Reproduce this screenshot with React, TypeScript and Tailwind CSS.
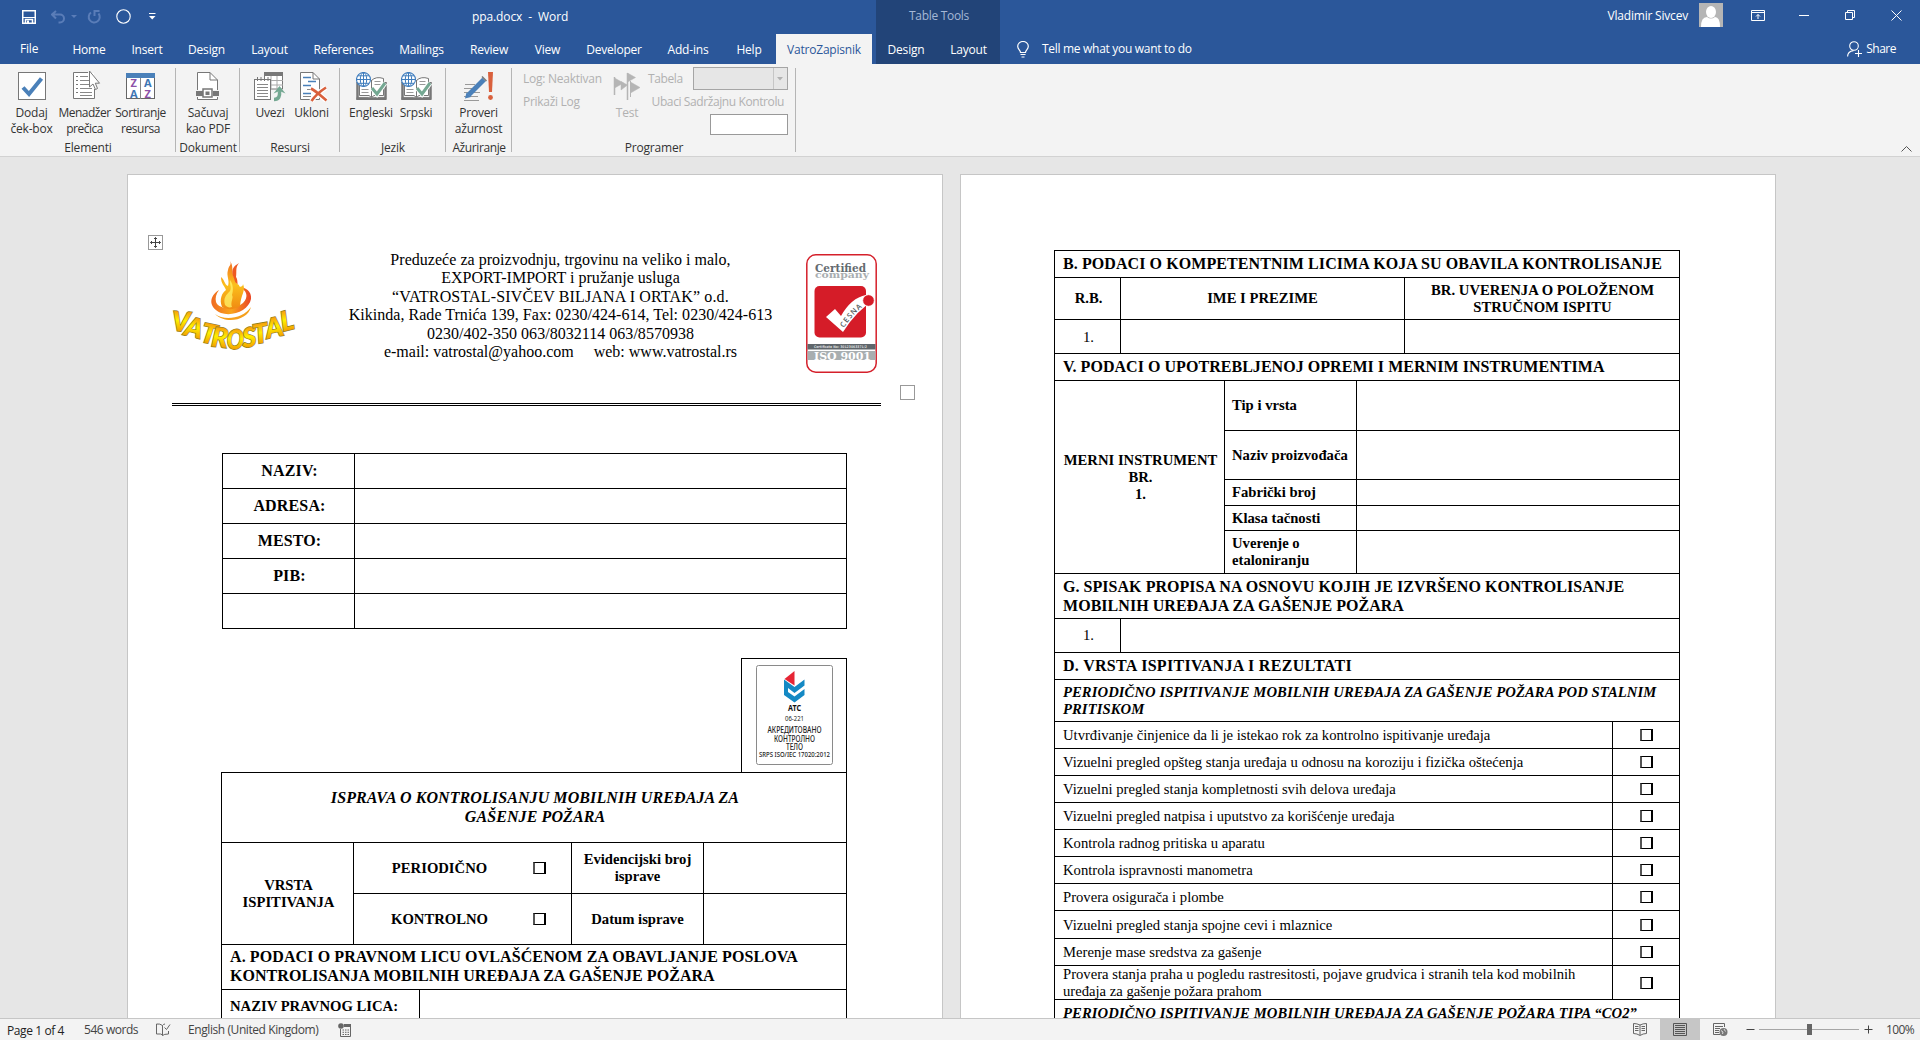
import React from "react";

type Kids = { children?: React.ReactNode };

/* ---------- ribbon icons ---------- */

function CheckBoxIcon() {
  return (
    <svg width="28" height="28" viewBox="0 0 28 28">
      <rect x="0.5" y="0.5" width="27" height="27" fill="#fff" stroke="#777" />
      <path d="M5 15.5 L11 22 L23.5 6.5" fill="none" stroke="#4a80b9" strokeWidth="4" />
    </svg>
  );
}

function CursorListIcon() {
  return (
    <svg width="28" height="30" viewBox="0 0 28 30">
      <path d="M1 3H21V28H1Z" fill="#fff" />
      <path d="M15 2.5H0.5V28.5H21.5V19" fill="none" stroke="#777" />
      <path d="M3 6.5h2M3 10.5h2M3 14.5h2M3 18.5h2M3 22.5h2" stroke="#777" />
      <path d="M7 6.5h8M7 10.5h9M7 14.5h9M7 18.5h12M7 22.5h12M7 25.5h12" stroke="#888" />
      <path d="M16.500 1V17L20 14L22.500 19.500L24.500 18.500L22.300 13.200H26.500Z" fill="#fff" stroke="#777" />
    </svg>
  );
}

function SortIcon() {
  return (
    <svg width="29" height="27" viewBox="0 0 29 27" fontFamily="Open Sans, sans-serif" fontSize="11" fontWeight="700">
      <rect x="0.5" y="0.5" width="28" height="25" fill="#fff" stroke="#666" />
      <rect x="0" y="0" width="29" height="5" fill="#4a80b9" />
      <path d="M14.500 5V26" stroke="#888" />
      <text x="7.500" y="14" textAnchor="middle" fill="#8d52a8">Z</text>
      <text x="21.500" y="14" textAnchor="middle" fill="#3e75b3">A</text>
      <text x="7.500" y="24.500" textAnchor="middle" fill="#3e75b3">A</text>
      <text x="21.500" y="24.500" textAnchor="middle" fill="#8d52a8">Z</text>
    </svg>
  );
}

function PdfIcon() {
  return (
    <svg width="24" height="28" viewBox="0 0 24 28">
      <path d="M1.500 18V0.500H14L21.500 8V18M1.500 25V27.500H21.500V25" fill="#fff" stroke="#777" />
      <path d="M14 0.500V8H21.500" fill="none" stroke="#777" />
      <rect x="0" y="19" width="7" height="5" fill="#777" />
      <rect x="17" y="19" width="6" height="5" fill="#777" />
      <rect x="7" y="17" width="9" height="8" fill="#fff" stroke="#777" strokeWidth="1.500" />
      <rect x="9.500" y="19.500" width="4" height="3.500" fill="#777" />
    </svg>
  );
}

function ImportIcon() {
  return (
    <svg width="32" height="30" viewBox="0 0 32 30">
      <path d="M10.500 0.500H28.500V17H10.500Z" fill="#fff" stroke="#777" />
      <rect x="10" y="0" width="19" height="4" fill="#777" />
      <path d="M17 4V17M23 4V17M16 8.500h13M16 13h13" stroke="#aaa" />
      <rect x="0.500" y="7.500" width="16" height="20" fill="#fff" stroke="#777" />
      <path d="M3.500 5v4M7 5v4M10.500 5v4M14 5v4" stroke="#777" />
      <path d="M3 12.500h11M3 15.500h11M3 18.500h11M3 21.500h11M3 24.500h11" stroke="#888" />
      <path d="M20 27.500C25 27.500 26 24 25.500 19" fill="none" stroke="#74a892" strokeWidth="3.500" />
      <path d="M25.500 14L31.500 21.500L25.500 19L19.500 21.500Z" fill="#74a892" />
    </svg>
  );
}

function RemoveIcon() {
  return (
    <svg width="28" height="30" viewBox="0 0 28 30">
      <path d="M0.500 0.500H13L19.500 7V27.500H0.500Z" fill="#fff" stroke="#777" />
      <path d="M13 0.500V7H19.500" fill="none" stroke="#777" />
      <path d="M3 5.500h8M3 13.500h8M8 9.500h8M3 21.500h8" stroke="#4a80b9" strokeWidth="1.600" />
      <path d="M7 17.500h6M3 24.500h8" stroke="#888" />
      <path d="M11 16.500C16 19 21 24 26.500 28.500M26 15.500C19 20 15 24 11.500 29" fill="none" stroke="#fff" strokeWidth="5" />
      <path d="M11 16.500C16 19 21 24 26.500 28.500M26 15.500C19 20 15 24 11.500 29" fill="none" stroke="#d9603c" strokeWidth="2.600" />
    </svg>
  );
}

function LanguageIcon() {
  return (
    <svg width="31" height="29" viewBox="0 0 31 29">
      <path d="M1.500 10V26.500H29.500V10" fill="none" stroke="#777" strokeWidth="2.500" />
      <path d="M3.500 9V23.500H13L15.500 25.500L18 23.500H27.500V6.500Q20 4 15.500 8.500" fill="#fff" stroke="#777" />
      <path d="M15.500 8V25" stroke="#777" />
      <path d="M0.500 25.500H12Q15.500 28.500 19 25.500H30V28H0.500Z" fill="#777" />
      <path d="M5.500 17.500h7M5.500 20.500h7M18.500 9.500h6M18.500 12.500h6M18.500 20.500h2" stroke="#999" />
      <circle cx="7.500" cy="7.500" r="7" fill="#fff" stroke="#3e7cbd" strokeWidth="1.100" />
      <ellipse cx="7.500" cy="7.500" rx="3.200" ry="7" fill="none" stroke="#3e7cbd" />
      <path d="M0.500 7.500h14M7.500 0.500v14M2 3.800h11M2 11.300h11" stroke="#3e7cbd" />
      <path d="M16 16L21 22L29 11" fill="none" stroke="#fff" strokeWidth="5" />
      <path d="M16 16L21 22L29 11" fill="none" stroke="#74a892" strokeWidth="3" />
    </svg>
  );
}

function UpdateIcon() {
  return (
    <svg width="30" height="30" viewBox="0 0 30 30">
      <path d="M1 12.500h10M0 16.500h8M0 20.500h16M0 24.500h14M0 28.500h15" stroke="#999" />
      <path d="M4.500 23L20 7.500" stroke="#4a80b9" strokeWidth="5" />
      <path d="M1 26.500L2.500 20.500L7 25Z" fill="#4a80b9" />
      <path d="M18 4.500L22.500 9" stroke="#777" strokeWidth="1.500" />
      <path d="M24 0H29L28 20H25Z" fill="#d9603c" />
      <circle cx="26.500" cy="25.500" r="2.400" fill="#d9603c" />
    </svg>
  );
}

function FlagsIcon() {
  return (
    <svg width="28" height="29" viewBox="0 0 28 29" fill="#b5b5b5" stroke="#b5b5b5">
      <path d="M1.500 5V23M14.500 1V28" fill="none" strokeWidth="1.500" />
      <path d="M1.500 6L10.500 11L1.500 16ZM14.500 1L22.500 5.500L14.500 10ZM14.500 13L8 18V9.500ZM17.500 10L27 15.500L17.500 21Z" strokeWidth="0.500" />
      <path d="M17.500 9V25" fill="none" />
    </svg>
  );
}

/* ---------- header ---------- */

function TitleBar() {
  return (
    <div className="flex h-[34px] items-stretch text-white">
      <div className="flex w-[472px] items-center pb-[1px] pl-[22px]">
        <svg width="14" height="14" viewBox="0 0 14 14" fill="none" stroke="#fff">
          <path d="M0.750 0.750H13.250V13.250H0.750Z" strokeWidth="1.500" />
          <path d="M1 7.500H13" />
          <path d="M3.500 13V9.500H10.500V13" strokeWidth="1.500" />
          <path d="M5 10.500h2v3h-2z" fill="#fff" stroke="none" />
        </svg>
        <svg className="ml-[15px]" width="14" height="14" viewBox="0 0 14 14" fill="none" stroke="#5a7db8" strokeWidth="2">
          <path d="M5 1L1 4.500L5 8.500M1.500 4.500H9A4 4 0 0 1 9 12.500H7.500" />
        </svg>
        <svg className="ml-[6px]" width="6" height="3" viewBox="0 0 6 3"><path d="M0 0H6L3 3Z" fill="#5a7db8" /></svg>
        <svg className="ml-[10px]" width="15" height="14" viewBox="0 0 15 14" fill="none" stroke="#5a7db8" strokeWidth="2">
          <path d="M4 2.500A5.500 5.500 0 1 0 11.500 3.500M12.500 1H7.500V6" />
        </svg>
        <svg className="ml-[14px]" width="15" height="15" viewBox="0 0 15 15" fill="none" stroke="#fff">
          <circle cx="7.500" cy="7.500" r="6.700" strokeWidth="1.100" />
        </svg>
        <svg className="ml-[18px]" width="7" height="7" viewBox="0 0 7 7"><path d="M0 0.500H6.500" stroke="#fff" /><path d="M0 3H6.500L3.200 6.500Z" fill="#fff" /></svg>
      </div>
      <div className="w-[404px] pt-[8px] leading-[17px] tracking-[-0.100px] whitespace-pre">ppa.docx  -  Word</div>
      <div className="w-[124px] bg-[#224478] pt-[7px] pl-[2px] text-center leading-[17px] tracking-[-0.300px] text-[#a5b8d6]">Table Tools</div>
      <div className="flex flex-1 items-start justify-end">
        <span className="mt-[7px] mr-[11px] leading-[17px]">Vladimir Sivcev</span>
        <svg className="mt-[3px] mr-[28px]" width="24" height="24" viewBox="0 0 24 24">
          <rect width="24" height="24" fill="#b5b5b5" />
          <ellipse cx="12" cy="9" rx="5" ry="6" fill="#fff" />
          <path d="M2 24Q2 14 8 14Q12 17 16 14Q21 14 21 24Z" fill="#fff" />
        </svg>
        <svg className="mt-[10px] mr-[34px]" width="14" height="11" viewBox="0 0 14 11" fill="none" stroke="#fff">
          <path d="M0.500 0.500H13.500V10.500H0.500ZM0.500 2.500H13.500M7 9V4.500M5 6.500L7 4.500L9 6.500" />
        </svg>
        <svg className="mt-[15px] mr-[36px]" width="10" height="1" viewBox="0 0 10 1"><path d="M0 0.500H10" stroke="#fff" /></svg>
        <svg className="mt-[10px] mr-[36px]" width="10" height="10" viewBox="0 0 10 10" fill="none" stroke="#fff">
          <path d="M0.500 2.500H7.500V9.500H0.500ZM2.500 2.500V0.500H9.500V7.500H7.500" />
        </svg>
        <svg className="mt-[10px] mr-[18px]" width="11" height="11" viewBox="0 0 11 11"><path d="M0.500 0.500L10.500 10.500M10.500 0.500L0.500 10.500" stroke="#fff" /></svg>
      </div>
    </div>
  );
}

function Tab({ w, children }: { w: string } & Kids) {
  return <div className={"pt-[7px] text-center leading-[17px] whitespace-nowrap " + w}>{children}</div>;
}

function TabRow() {
  return (
    <div className="flex h-[30px] text-white">
      <div className="w-[59px] pt-[6px] pl-[20px] leading-[17px]">File</div>
      <Tab w="w-[60px]">Home</Tab>
      <Tab w="w-[56px]">Insert</Tab>
      <Tab w="w-[63px]">Design</Tab>
      <Tab w="w-[63px]">Layout</Tab>
      <Tab w="w-[85px]">References</Tab>
      <Tab w="w-[71px]">Mailings</Tab>
      <Tab w="w-[64px]">Review</Tab>
      <Tab w="w-[53px]">View</Tab>
      <Tab w="w-[80px]">Developer</Tab>
      <Tab w="w-[68px]">Add-ins</Tab>
      <Tab w="w-[54px]">Help</Tab>
      <Tab w="w-[96px] bg-[#f3f3f3] text-[#2b579a] mr-[4px]">VatroZapisnik</Tab>
      <Tab w="w-[61px] bg-[#224478] pr-px">Design</Tab>
      <Tab w="w-[63px] bg-[#224478]">Layout</Tab>
      <svg className="mt-[7px] ml-[17px]" width="12" height="17" viewBox="0 0 12 17" fill="none" stroke="#fff" strokeWidth="1.200">
        <path d="M3.500 11.500C3.500 9 0.700 8.500 0.700 5.300A5.200 4.700 0 0 1 11.300 5.300C11.300 8.500 8.500 9 8.500 11.500ZM3.500 13.500H8.500M4.500 16H7.500" />
      </svg>
      <div className="ml-[13px] pt-[6px] leading-[17px] tracking-[-0.300px] whitespace-nowrap">Tell me what you want to do</div>
      <div className="flex flex-1 justify-end pr-[24px]">
        <svg className="mt-[7px] mr-[4px]" width="15" height="16" viewBox="0 0 15 16" fill="none" stroke="#fff" strokeWidth="1.100">
          <circle cx="7" cy="5" r="4.300" />
          <path d="M0.600 15.500C0.600 11.500 3 10 6.500 9.600M8 12.500H15M11.500 9V16" />
        </svg>
        <span className="pt-[6px] leading-[17px] tracking-[-0.500px]">Share</span>
      </div>
    </div>
  );
}

/* ---------- ribbon ---------- */

function Group({ w, label, children }: { w: string; label: string } & Kids) {
  return (
    <div className={"flex flex-col " + w}>
      <div className="flex h-[76px]">{children}</div>
      <div className="pl-px text-center leading-[16px] whitespace-nowrap text-[#333]">{label}</div>
    </div>
  );
}

function Sep() {
  return <div className="mt-[4px] h-[84px] w-px shrink-0 bg-[#b5b5b5]" />;
}

function Btn({ w, icon, lines, dim }: { w: string; icon: React.ReactNode; lines: string[]; dim?: boolean }) {
  return (
    <div className={"flex shrink-0 flex-col items-center pt-[8px] " + w}>
      <div className="flex h-[33px] items-start">{icon}</div>
      {lines.map((l) => (
        <div key={l} className={"leading-[16px] whitespace-nowrap " + (dim ? "text-[#b1b1b1]" : "text-[#333]")}>{l}</div>
      ))}
    </div>
  );
}

function Ribbon() {
  return (
    <div className="flex h-[93px] border-b border-[#d2d2d2] bg-[#f3f3f3]">
      <Group w="w-[175px]" label="Elementi">
        <div className="w-[4px]" />
        <Btn w="w-[55px]" icon={<CheckBoxIcon />} lines={["Dodaj", "ček-box"]} />
        <Btn w="w-[51px] tracking-[-0.500px]" icon={<div className="-mt-[2px] ml-[4px]"><CursorListIcon /></div>} lines={["Menadžer", "prečica"]} />
        <Btn w="w-[61px] tracking-[-0.400px]" icon={<div className="mt-[1px]"><SortIcon /></div>} lines={["Sortiranje", "resursa"]} />
      </Group>
      <Sep />
      <Group w="w-[63px]" label="Dokument">
        <Btn w="w-[64px]" icon={<PdfIcon />} lines={["Sačuvaj", "kao PDF"]} />
      </Group>
      <Sep />
      <Group w="w-[99px]" label="Resursi">
        <div className="w-[9px]" />
        <Btn w="w-[42px]" icon={<ImportIcon />} lines={["Uvezi"]} />
        <Btn w="w-[41px]" icon={<div className="ml-[5px]"><RemoveIcon /></div>} lines={["Ukloni"]} />
      </Group>
      <Sep />
      <Group w="w-[105px]" label="Jezik">
        <div className="w-[7px]" />
        <Btn w="w-[48px]" icon={<LanguageIcon />} lines={["Engleski"]} />
        <Btn w="w-[42px]" icon={<LanguageIcon />} lines={["Srpski"]} />
      </Group>
      <Sep />
      <Group w="w-[65px] tracking-[-0.400px]" label="Ažuriranje">
        <Btn w="w-[65px] tracking-[-0.200px]" icon={<UpdateIcon />} lines={["Proveri", "ažurnost"]} />
      </Group>
      <Sep />
      <Group w="w-[283px]" label="Programer">
        <div className="w-[91px] shrink-0 pl-[11px] text-[#b1b1b1]">
          <div className="pt-[7px] leading-[16px] tracking-[-0.250px] whitespace-nowrap">Log: Neaktivan</div>
          <div className="pt-[7px] leading-[16px] tracking-[-0.300px] whitespace-nowrap">Prikaži Log</div>
        </div>
        <Btn w="w-[48px]" icon={<FlagsIcon />} lines={["Test"]} dim />
        <div className="flex w-[137px] shrink-0 flex-col items-end text-[#b1b1b1]">
          <div className="flex w-full items-start justify-between">
            <span className="-ml-[3px] pt-[7px] leading-[16px] tracking-[-0.400px]">Tabela</span>
            <div className="mt-[3px] flex h-[23px] w-[95px] border border-[#a5a5a5] bg-[#e6e6e6]">
              <div className="w-[80px] border-r border-[#c6c6c6]" />
              <svg className="mt-[9px] ml-[3px]" width="6" height="4" viewBox="0 0 6 4"><path d="M0 0H6L3 3.500Z" fill="#b1b1b1" /></svg>
            </div>
          </div>
          <div className="mt-[4px] mr-[4px] leading-[16px] tracking-[-0.400px] whitespace-nowrap">Ubaci Sadržajnu Kontrolu</div>
          <div className="mt-[4px] h-[21px] w-[78px] border border-[#999] bg-white" />
        </div>
      </Group>
      <Sep />
      <div className="flex flex-1 items-end justify-end pr-[8px] pb-[4px]">
        <svg width="11" height="6" viewBox="0 0 11 6" fill="none" stroke="#555"><path d="M0.500 5.500L5.500 0.500L10.500 5.500" /></svg>
      </div>
    </div>
  );
}

/* ---------- document pieces ---------- */

function Cell({ w, h, className = "", children }: { w: string; h: string; className?: string } & Kids) {
  return (
    <div className={"flex shrink-0 items-center border-r border-b border-black " + w + " " + h + " " + className}>
      {children}
    </div>
  );
}

function Box() {
  return <div className="h-[12px] w-[13px] border-x-2 border-y border-black border-l-[#555]" />;
}

const fireLetters: [string, number, number, number][] = [
  ["V", 8, 71, 4],
  ["A", 20, 77, 14],
  ["T", 35, 83, 12],
  ["R", 47, 87, 6],
  ["O", 63, 89, 2],
  ["S", 78, 87, -5],
  ["T", 90, 83, -10],
  ["A", 104, 77, -12],
  ["L", 117, 70, -14],
];

function VatrostalLogo() {
  return (
    <svg className="overflow-visible" width="126" height="94" viewBox="0 0 126 94">
      <defs>
        <linearGradient id="flame" x1="0" y1="0" x2="0" y2="1">
          <stop offset="0" stopColor="#f36f21" />
          <stop offset="0.500" stopColor="#fbc01c" />
          <stop offset="1" stopColor="#f08a12" />
        </linearGradient>
        <linearGradient id="bowl" x1="0" y1="0" x2="1" y2="0">
          <stop offset="0" stopColor="#f06a22" />
          <stop offset="0.500" stopColor="#f9a51c" />
          <stop offset="1" stopColor="#ea4424" />
        </linearGradient>
        <linearGradient id="letters" x1="0" y1="0" x2="0" y2="1">
          <stop offset="0.150" stopColor="#f58a10" />
          <stop offset="0.500" stopColor="#fff000" />
          <stop offset="0.850" stopColor="#f29a00" />
        </linearGradient>
      </defs>
      <path d="M47 30C36 37 37 48 49 53C61 57 77 50 79 39C80 31 73 27 67 27C75 30 77 37 71 43C63 50 47 50 44 42C43 38 44 34 47 30Z" fill="url(#bowl)" />
      <path d="M50 47C47 39 50 33 54 30C52 25 49 24 49 17C53 20 52 24 56 26C58 20 54 16 56 10C57 5 60 5 58 1C62 6 59 12 62 17C65 21 63 23 67 25C67 28 71 27 71 24C74 31 69 34 68 46C62 50 55 50 50 47Z" fill="url(#flame)" />
      <path d="M61 16C59 9 62 6 67 3C63 8 65 11 64 17C66 20 65 23 66 24C62 23 63 19 61 16Z" fill="#ef5a23" />
      <path d="M53 45C51 38 54 35 58 31C60 27 57 23 58 20C62 25 61 32 60 35C62 38 58 42 60 47C57 48 55 47 53 45Z" fill="#fff46a" opacity="0.750" />
      <path d="M43 54C52 61 71 59 79 47C76 60 54 65 43 54Z" fill="#f5a01d" />
      {fireLetters.map(([c, x, y, r], i) => (
        <text
          key={i}
          x={x}
          y={y}
          textAnchor="middle"
          transform={`rotate(${r} ${x} ${y})`}
          fontFamily="Lato, sans-serif"
          fontWeight="900"
          fontStyle="italic"
          fontSize="27"
          textLength={c === "O" ? 17 : undefined}
          lengthAdjust="spacingAndGlyphs"
          fill="url(#letters)"
          stroke="#8f7d1a"
          strokeWidth="1.400"
          paintOrder="stroke"
        >
          {c}
        </text>
      ))}
    </svg>
  );
}

function CertifiedLogo() {
  return (
    <svg width="71" height="119" viewBox="0 0 71 119">
      <rect x="0.800" y="0.800" width="69.400" height="117.400" rx="9" fill="#fff" stroke="#d5202b" strokeWidth="1.500" />
      <text x="9" y="23.500" fontFamily="DejaVu Serif, serif" fontSize="10" fontWeight="700" fill="#a9aeb1" textLength="54" lengthAdjust="spacingAndGlyphs">company</text>
      <text x="9" y="18" fontFamily="DejaVu Serif, serif" fontSize="10.500" fontWeight="700" fill="#646b70" textLength="51" lengthAdjust="spacingAndGlyphs">Certified</text>
      <rect x="8.500" y="32" width="51.500" height="51.500" rx="5" fill="#d51c28" />
      <path d="M20 63L29 55L35 62Q45 44 60 41L67 47Q51 56 37 78Z" fill="#fff" />
      <circle cx="62.500" cy="46.500" r="5.800" fill="#d51c28" stroke="#fff" strokeWidth="0.800" />
      <path id="cesna" d="M38 74Q45 62 60 50" fill="none" />
      <text fontFamily="Open Sans, sans-serif" fontSize="7.500" fontWeight="600" fill="#555b60"><textPath href="#cesna" textLength="28">CESNA</textPath></text>
      <rect x="1.500" y="90" width="68" height="5.500" fill="#5f666b" />
      <text x="8" y="94.200" fontFamily="DejaVu Sans, sans-serif" fontSize="3.600" fontWeight="700" fill="#dadcdd" textLength="53" lengthAdjust="spacingAndGlyphs">Certificate No: 30123063371/2</text>
      <rect x="1.500" y="97" width="68" height="9" fill="#a8aeb0" />
      <text x="8" y="106" fontFamily="DejaVu Serif, serif" fontSize="11.500" fontWeight="700" fill="#fff" textLength="57" lengthAdjust="spacingAndGlyphs">ISO 9001</text>
    </svg>
  );
}

function AtsStamp() {
  return (
    <svg width="77" height="100" viewBox="0 0 77 100" fontFamily="Noto Sans, sans-serif" textAnchor="middle" fill="#222">
      <rect x="0.500" y="0.500" width="76" height="99" rx="2" fill="#fff" stroke="#8a8a8a" />
      <path d="M38.500 6V20.500L28.500 14Z" fill="#e62535" />
      <path d="M28 14.500L38.500 22L48.500 14.500V20.500L38.500 28L32 23V27L38.500 31.500L48.500 24V30L38.500 37.500L28 30Z" fill="#1489c4" />
      <text x="38.500" y="46" fontSize="8" fontWeight="700" fill="#111" textLength="13" lengthAdjust="spacingAndGlyphs">АТС</text>
      <text x="38.500" y="56" fontSize="6.500" textLength="19" lengthAdjust="spacingAndGlyphs">06-221</text>
      <text x="38.500" y="68" fontSize="8" fontWeight="500" textLength="54" lengthAdjust="spacingAndGlyphs">АКРЕДИТОВАНО</text>
      <text x="38.500" y="76.500" fontSize="8" fontWeight="500" textLength="41" lengthAdjust="spacingAndGlyphs">КОНТРОЛНО</text>
      <text x="38.500" y="84.700" fontSize="8" fontWeight="500" textLength="17" lengthAdjust="spacingAndGlyphs">ТЕЛО</text>
      <text x="38.500" y="92.300" fontSize="6.800" fontWeight="500" textLength="71" lengthAdjust="spacingAndGlyphs">SRPS ISO/IEC 17020:2012</text>
    </svg>
  );
}

function PageOne() {
  return (
    <div className="h-[1056px] w-[816px] shrink-0 border border-[#c6c6c6] bg-white pt-[60px]">
      <div className="flex h-[150px]">
        <svg className="ml-[20px]" width="15" height="15" viewBox="0 0 15 15" fill="none" stroke="#444">
          <rect x="0.500" y="0.500" width="14" height="14" stroke="#999" />
          <path d="M7.500 2.500V12.500M2.500 7.500H12.500" />
          <path d="M6 4L7.500 2.500L9 4M6 11L7.500 12.500L9 11M4 6L2.500 7.500L4 9M11 6L12.500 7.500L11 9" />
        </svg>
        <div className="mt-[25px] ml-[9px]"><VatrostalLogo /></div>
        <div className="mt-[16px] ml-[44px] w-[437px] text-center text-[16px] leading-[18.400px] tracking-[0.030px] whitespace-pre">
          <div>Preduzeće za proizvodnju, trgovinu na veliko i malo,</div>
          <div>EXPORT-IMPORT i pružanje usluga</div>
          <div className="tracking-[0.150px]">“VATROSTAL-SIVČEV BILJANA I ORTAK” o.d.</div>
          <div>Kikinda, Rade Trnića 139, Fax: 0230/424-614, Tel: 0230/424-613</div>
          <div>0230/402-350 063/8032114 063/8570938</div>
          <div className="tracking-normal">e-mail: vatrostal@yahoo.com     web: www.vatrostal.rs</div>
        </div>
        <div className="mt-[19px] ml-[27px]"><CertifiedLogo /></div>
      </div>
      <div className="flex h-[18px] justify-end pr-[27px]">
        <div className="h-[15px] w-[15px] border border-[#999]" />
      </div>
      <div className="ml-[44px] h-[3px] w-[709px] border-y border-black" />

      <div className="mt-[47px] ml-[94px] w-[625px] border-t border-l border-black text-[16px] leading-[18.400px] font-bold tracking-[0.150px]">
        {["NAZIV:", "ADRESA:", "MESTO:", "PIB:", ""].map((l) => (
          <div key={l} className="flex">
            <Cell w="w-[132px]" h="h-[35px]" className="justify-center pl-[2px]">{l}</Cell>
            <Cell w="w-[492px]" h="h-[35px]" />
          </div>
        ))}
      </div>

      <div className="mt-[29px] ml-[613px] h-[114px] w-[106px] border-x border-t border-black pt-[6px] pl-[14px]">
        <AtsStamp />
      </div>
      <div className="ml-[93px] w-[626px] border-t border-l border-black text-[14.670px] leading-[17px] font-bold">
        <Cell w="w-[625px]" h="h-[70px]" className="justify-center pl-[2px] text-center text-[16px] leading-[18.600px] tracking-[0.090px] italic">
          <div>
            <div>ISPRAVA O KONTROLISANJU MOBILNIH UREĐAJA ZA</div>
            <div>GAŠENJE POŽARA</div>
          </div>
        </Cell>
        <div className="flex">
          <Cell w="w-[132px]" h="h-[102px]" className="justify-center pl-[2px] text-center">
            <div>VRSTA<br />ISPITIVANJA</div>
          </Cell>
          <div>
            {[["PERIODIČNO", "Evidencijski broj isprave"], ["KONTROLNO", "Datum isprave"]].map(([a, b]) => (
              <div key={a} className="flex">
                <Cell w="w-[218px]" h="h-[51px]">
                  <div className="w-[171px] text-center">{a}</div>
                  <div className="ml-[8px]"><Box /></div>
                </Cell>
                <Cell w="w-[132px]" h="h-[51px]" className="justify-center px-[8px] text-center">{b}</Cell>
                <Cell w="w-[143px]" h="h-[51px]" />
              </div>
            ))}
          </div>
        </div>
        <Cell w="w-[625px]" h="h-[45px]" className="pl-[8px] text-[16px] leading-[18.600px]">
          <div className="tracking-[0.100px]">A. PODACI O PRAVNOM LICU OVLAŠĆENOM ZA OBAVLJANJE POSLOVA<br /><span className="tracking-[0.050px]">KONTROLISANJA MOBILNIH UREĐAJA ZA GAŠENJE POŽARA</span></div>
        </Cell>
        <div className="flex">
          <Cell w="w-[198px]" h="h-[35px]" className="pb-px pl-[8px]">NAZIV PRAVNOG LICA:</Cell>
          <Cell w="w-[427px]" h="h-[35px]" />
        </div>
      </div>
    </div>
  );
}

const checks: [string, string][] = [
  ["Utvrđivanje činjenice da li je istekao rok za kontrolno ispitivanje uređaja", "h-[27px]"],
  ["Vizuelni pregled opšteg stanja uređaja u odnosu na koroziju i fizička oštećenja", "h-[27px]"],
  ["Vizuelni pregled stanja kompletnosti svih delova uređaja", "h-[27px]"],
  ["Vizuelni pregled natpisa i uputstvo za korišćenje uređaja", "h-[27px]"],
  ["Kontrola radnog pritiska u aparatu", "h-[27px]"],
  ["Kontrola ispravnosti manometra", "h-[27px]"],
  ["Provera osigurača i plombe", "h-[27px]"],
  ["Vizuelni pregled stanja spojne cevi i mlaznice", "h-[28px]"],
  ["Merenje mase sredstva za gašenje", "h-[27px]"],
  ["Provera stanja praha u pogledu rastresitosti, pojave grudvica i stranih tela kod mobilnih uređaja za gašenje požara prahom", "h-[34px]"],
];

const instrument: [string, string][] = [
  ["Tip i vrsta", "h-[50px]"],
  ["Naziv proizvođača", "h-[49px]"],
  ["Fabrički broj", "h-[26px]"],
  ["Klasa tačnosti", "h-[25px]"],
  ["Uverenje o etaloniranju", "h-[43px]"],
];

function PageTwo() {
  const heading = "pl-[8px] font-bold text-[16px] leading-[18.600px]";
  return (
    <div className="h-[1056px] w-[816px] shrink-0 border border-[#c6c6c6] bg-white pt-[75px] pl-[93px]">
      <div className="w-[626px] border-t border-l border-black text-[14.670px] leading-[17px]">
        <Cell w="w-[625px]" h="h-[27px]" className={heading + " tracking-[0.080px]"}>B. PODACI O KOMPETENTNIM LICIMA KOJA SU OBAVILA KONTROLISANJE</Cell>
        <div className="flex text-center font-bold">
          <Cell w="w-[66px]" h="h-[42px]" className="justify-center pl-[2px]">R.B.</Cell>
          <Cell w="w-[284px]" h="h-[42px]" className="justify-center">IME I PREZIME</Cell>
          <Cell w="w-[275px]" h="h-[42px]" className="justify-center pl-px">
            <div className="tracking-[0.030px]">BR. UVERENJA O POLOŽENOM<br />STRUČNOM ISPITU</div>
          </Cell>
        </div>
        <div className="flex">
          <Cell w="w-[66px]" h="h-[34px]" className="justify-center pt-px pl-[2px]">1.</Cell>
          <Cell w="w-[284px]" h="h-[34px]" />
          <Cell w="w-[275px]" h="h-[34px]" />
        </div>
        <Cell w="w-[625px]" h="h-[27px]" className={heading + " tracking-[0.040px]"}>V. PODACI O UPOTREBLJENOJ OPREMI I MERNIM INSTRUMENTIMA</Cell>
        <div className="flex font-bold">
          <Cell w="w-[170px]" h="h-[193px]" className="justify-center pt-px pl-[2px] text-center">
            <div className="leading-[16.700px] whitespace-nowrap">MERNI INSTRUMENT<br />BR.<br />1.</div>
          </Cell>
          <div>
            {instrument.map(([l, h]) => (
              <div key={l} className="flex">
                <Cell w="w-[132px]" h={h} className="pl-[7px]">{l}</Cell>
                <Cell w="w-[323px]" h={h} />
              </div>
            ))}
          </div>
        </div>
        <Cell w="w-[625px]" h="h-[45px]" className={heading + " pt-px tracking-[0.040px]"}>
          <div>G. SPISAK PROPISA NA OSNOVU KOJIH JE IZVRŠENO KONTROLISANJE<br />MOBILNIH UREĐAJA ZA GAŠENJE POŽARA</div>
        </Cell>
        <div className="flex">
          <Cell w="w-[66px]" h="h-[34px]" className="justify-center pl-[2px]">1.</Cell>
          <Cell w="w-[559px]" h="h-[34px]" />
        </div>
        <Cell w="w-[625px]" h="h-[27px]" className={heading + " tracking-[0.300px]"}>D. VRSTA ISPITIVANJA I REZULTATI</Cell>
        <Cell w="w-[625px]" h="h-[42px]" className="pl-[8px] font-bold tracking-[0.070px] italic">
          <div>PERIODIČNO ISPITIVANJE MOBILNIH UREĐAJA ZA GAŠENJE POŽARA POD STALNIM<br />PRITISKOM</div>
        </Cell>
        {checks.map(([l, h]) => (
          <div key={l} className="flex">
            <Cell w="w-[558px]" h={h} className="pt-px pr-[20px] pl-[8px]">{l}</Cell>
            <Cell w="w-[67px]" h={h} className="justify-center"><Box /></Cell>
          </div>
        ))}
        <Cell w="w-[625px]" h="h-[34px]" className="items-start pt-[5px] pl-[8px] font-bold tracking-[0.090px] italic">
          PERIODIČNO ISPITIVANJE MOBILNIH UREĐAJA ZA GAŠENJE POŽARA TIPA “CO2”
        </Cell>
      </div>
    </div>
  );
}

/* ---------- status bar ---------- */

function StatusBar() {
  return (
    <div className="flex h-[22px] items-center border-t border-[#c6c6c6] bg-[#f3f3f3] leading-[16px] whitespace-nowrap text-[#444]">
      <span className="w-[77px] pt-[2px] pl-[7px] tracking-[-0.400px] text-[#222]">Page 1 of 4</span>
      <span className="w-[79px] pl-[7px] tracking-[-0.450px]">546 words</span>
      <svg width="15" height="13" viewBox="0 0 15 13" fill="none" stroke="#666">
        <path d="M6.500 2.500Q4 0.500 0.500 1V11H4.500Q6.500 11.500 6.500 12.500V2.500Q7.500 1 9 1M6.500 12.500Q8 11 12.500 11V8M8.500 4.500L10.500 6.500L14 1.500" />
      </svg>
      <span className="w-[150px] pl-[17px] tracking-[-0.420px]">English (United Kingdom)</span>
      <svg className="ml-[17px]" width="14" height="14" viewBox="0 0 14 14" fill="none" stroke="#666">
        <path d="M2.500 6V13.500H12.500V2.500H7" />
        <path d="M6 2.500h7" strokeWidth="3" />
        <circle cx="3" cy="3" r="2.800" fill="#666" stroke="none" />
        <path d="M4.500 7h6.500M4.500 9.300h6.500M4.500 11.500h6.500" strokeDasharray="1.500 1" />
      </svg>
      <div className="flex h-full flex-1 items-center justify-end pr-[7px]">
        <svg width="14" height="13" viewBox="0 0 14 13" fill="none" stroke="#666">
          <path d="M7 2Q4 0.500 0.500 0.500V10.500Q4 10.500 7 12.500Q10 10.500 13.500 10.500V0.500Q10 0.500 7 2V12" />
          <path d="M2 3.500h3.500M2 5.500h3.500M2 7.500h3.500M8.500 3.500h3.500M8.500 5.500h3.500M8.500 7.500h3.500" />
        </svg>
        <div className="ml-[13px] flex h-full w-[40px] items-center justify-center bg-[#c6c6c6]">
          <svg width="14" height="13" viewBox="0 0 14 13" fill="none" stroke="#555">
            <path d="M0.500 0.500H13.500V12.500H0.500ZM2 2.500h10M2 4.500h10M2 6.500h10M2 8.500h10M2 10.500h10" />
          </svg>
        </div>
        <svg className="ml-[13px]" width="15" height="13" viewBox="0 0 15 13" fill="none" stroke="#666">
          <path d="M7 11.500H0.500V0.500H11.500V4M2 3.500h8M2 5.500h5M2 7.500h4M2 9.500h4" />
          <circle cx="10.500" cy="9" r="4" fill="#777" stroke="none" />
          <path d="M8 7.500L10 9L9.500 11M11 6L12.500 8.500" stroke="#ddd" />
        </svg>
        <svg className="ml-[18px]" width="9" height="9" viewBox="0 0 9 9"><path d="M0.500 4.500H8.500" stroke="#444" /></svg>
        <div className="ml-[4px] flex h-[11px] w-[100px] items-center">
          <div className="h-px w-[48px] bg-[#a6a6a6]" />
          <div className="h-[11px] w-[5px] bg-[#666]" />
          <div className="h-px w-[47px] bg-[#a6a6a6]" />
        </div>
        <svg className="ml-[5px]" width="9" height="9" viewBox="0 0 9 9"><path d="M0.500 4.500H8.500M4.500 0.500V8.500" stroke="#444" /></svg>
        <span className="ml-[13px] w-[27px] tracking-[-0.600px]">100%</span>
      </div>
    </div>
  );
}

export default function App() {
  return (
    <div className="flex h-[1040px] w-[1920px] flex-col overflow-hidden bg-[#e6e6e6] font-['Open_Sans','Noto_Sans',sans-serif] text-[12px] tracking-[-0.200px]">
      <div className="shrink-0 bg-[#2b579a]">
        <TitleBar />
        <TabRow />
      </div>
      <Ribbon />
      <div className="flex min-h-0 flex-1 gap-[17px] overflow-hidden pt-[17px] pl-[127px] font-['Liberation_Serif','Times_New_Roman',serif] tracking-normal text-black">
        <PageOne />
        <PageTwo />
      </div>
      <StatusBar />
    </div>
  );
}
